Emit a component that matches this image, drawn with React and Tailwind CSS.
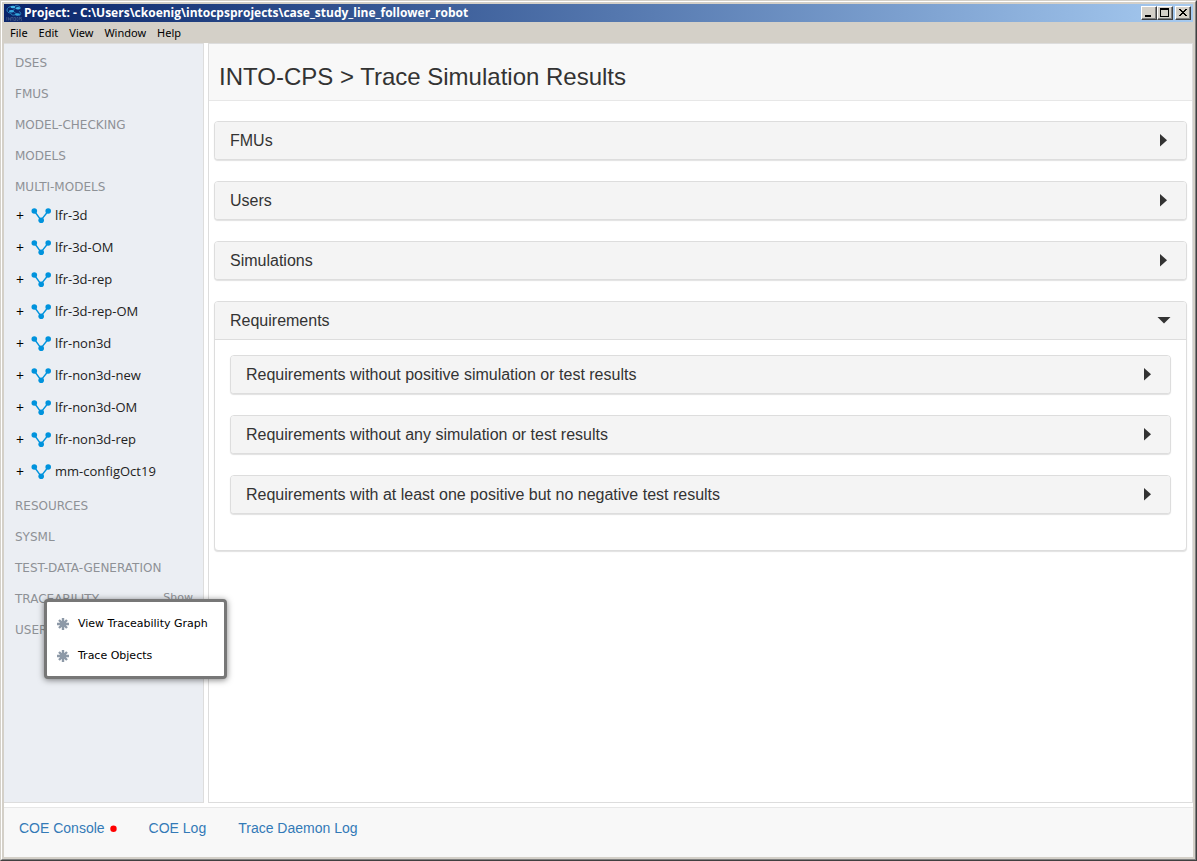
import React from "react";

const MENUS = ["File", "Edit", "View", "Window", "Help"];
const TOP_SECTIONS = ["DSES", "FMUS", "MODEL-CHECKING", "MODELS", "MULTI-MODELS"];
const MODELS = [
  "lfr-3d",
  "lfr-3d-OM",
  "lfr-3d-rep",
  "lfr-3d-rep-OM",
  "lfr-non3d",
  "lfr-non3d-new",
  "lfr-non3d-OM",
  "lfr-non3d-rep",
  "mm-configOct19",
];
const LOWER_SECTIONS = ["RESOURCES", "SYSML", "TEST-DATA-GENERATION"];
const REQUIREMENTS = [
  "Requirements without positive simulation or test results",
  "Requirements without any simulation or test results",
  "Requirements with at least one positive but no negative test results",
];

function AppLogo() {
  return (
    <svg className="h-4 w-4 shrink-0" viewBox="0 0 16 16" aria-hidden="true">
      <path d="M6 1.500C3 1.500 1 3 1 5s1.500 3 3.500 3M9 .8c3-.6 5.500.7 5.500 2.700M4.500 8c.5 2 3 2.800 5 1.500M13 6.500c2 .5 2.500 3 .5 4.200" fill="none" stroke="#2583bd" strokeWidth="1" />
      <path d="M5.500 6.500 10 3M8 7l4 3" fill="none" stroke="#2583bd" strokeWidth=".8" />
      <ellipse cx="7" cy="2" rx="2.400" ry="1.200" fill="#43b6e8" />
      <ellipse cx="12" cy="3.200" rx="2.200" ry="1.200" fill="#43b6e8" />
      <ellipse cx="5.500" cy="6.300" rx="2.600" ry="1.200" fill="#35a9df" />
      <ellipse cx="11.500" cy="9.500" rx="2.500" ry="1.300" fill="#35a9df" />
      <path d="M.8 12v3.500M2.500 15.500V12.500l2 3V12.500M5 12.500h2M6 12.500v3M7.800 12.500h1.700v3H7.800zM12 12.500h-1v3h1M13 15.500v-3h1.200v1.500H13M15.700 12.500h-.9v1.500h.9v1.500h-.9" fill="none" stroke="#49618d" strokeWidth=".7" />
    </svg>
  );
}

function WindowButton({ label, children }) {
  return (
    <button
      type="button"
      aria-label={label}
      className="flex h-3.5 w-4 items-center justify-center border border-t-white border-r-[#404040] border-b-[#404040] border-l-white bg-[#d4d0c8] shadow-[inset_-1px_-1px_0_#808080]"
    >
      <svg className="h-3 w-3.5 shrink-0" viewBox="0 0 14 12" shapeRendering="crispEdges" aria-hidden="true">
        {children}
      </svg>
    </button>
  );
}

function ModelIcon() {
  return (
    <svg className="h-4 w-5 shrink-0" viewBox="0 0 20 16" aria-hidden="true">
      <path d="M3.300 3 10 12.200 17.300 3" fill="none" stroke="#0093dd" strokeWidth="1.400" />
      <circle cx="3.300" cy="3" r="2.800" fill="#0093dd" />
      <circle cx="17.200" cy="3" r="2.800" fill="#0093dd" />
      <circle cx="10.200" cy="12.200" r="2.800" fill="#0093dd" />
    </svg>
  );
}

function AsteriskIcon() {
  return (
    <svg className="h-3 w-3 shrink-0" viewBox="0 0 12 12" aria-hidden="true">
      <path d="M6 0v12M0 6h12M2 2l8 8M10 2l-8 8" stroke="#8d99a7" strokeWidth="2.400" />
    </svg>
  );
}

function Caret({ open }) {
  return open ? (
    <svg className="h-3.5 w-3.5" viewBox="0 0 14 14" aria-hidden="true">
      <path d="M0.500 3h13L7 9.500z" fill="#333" />
    </svg>
  ) : (
    <svg className="h-3.5 w-3.5" viewBox="0 0 14 14" aria-hidden="true">
      <path d="M3 0v12.500L10 6.200z" fill="#333" />
    </svg>
  );
}

function Section({ children, action }) {
  return (
    <div className="flex h-[31px] items-center justify-between pr-2.5 pl-[11px] text-[#8e9196]">
      <h2 className="text-xs">{children}</h2>
      {action && (
        <button type="button" className="shrink-0 text-[11px]">
          {action}
        </button>
      )}
    </div>
  );
}

function Panel({ title, open = false, children }) {
  return (
    <section className="rounded border border-[#ddd] bg-white shadow-[0_1px_1px_rgba(0,0,0,0.12)]">
      <button
        type="button"
        aria-expanded={open}
        className={
          "flex w-full items-center justify-between rounded-t-[3px] bg-[#f4f4f4] px-[15px] text-left text-base text-[#333] " +
          (open ? "h-[38px] border-b border-[#ddd]" : "h-[37px] rounded-b-[3px]")
        }
      >
        <span>{title}</span>
        <Caret open={open} />
      </button>
      {children}
    </section>
  );
}

export default function App() {
  return (
    <div className="flex min-h-screen flex-col border border-t-[#d4d0c8] border-r-[#404040] border-b-[#404040] border-l-[#d4d0c8] bg-white font-['Liberation_Sans',Arial,sans-serif]">
      <div className="flex grow flex-col border border-t-white border-r-[#808080] border-b-[#808080] border-l-white">
        <div className="flex grow flex-col border-2 border-[#d4d0c8]">
          <header className="bg-[#d4d0c8]">
            <div className="flex h-[18px] items-center gap-0.5 bg-linear-to-r from-[#0a246a] to-[#a6caf0] px-0.5 text-white">
              <AppLogo />
              <h1 className="grow truncate font-['Open_Sans',Tahoma,sans-serif] text-xs font-bold">
                Project: - C:\Users\ckoenig\intocpsprojects\case_study_line_follower_robot
              </h1>
              <div className="flex gap-0.5">
                <div className="flex">
                  <WindowButton label="Minimize">
                    <path d="M3 8h6v2H3z" />
                  </WindowButton>
                  <WindowButton label="Maximize">
                    <path fillRule="evenodd" d="M2 1h9v9H2zM3 3v6h7V3z" />
                  </WindowButton>
                </div>
                <WindowButton label="Close">
                  <path d="M3 2h2v1h1v1h2V3h1V2h2v1h-1v1H9v1H8v1h1v1h1v1h1v1H9V8H8V7H6v1H5v1H3V8h1V7h1V6h1V5H5V4H4V3H3z" />
                </WindowButton>
              </div>
            </div>
            <nav className="flex h-[21px] items-center gap-px px-px pt-0.5 font-['Noto_Sans',sans-serif] text-[11px] text-black">
              {MENUS.map((m) => (
                <button type="button" key={m} className="px-[5px]">
                  {m}
                </button>
              ))}
            </nav>
          </header>

          <div className="flex grow gap-1 pb-1">
            <aside className="relative w-[200px] shrink-0 border-t border-r border-b border-[#ddd] bg-[#ebeef3] pt-[3px] font-['DejaVu_Sans',Verdana,sans-serif]">
              {TOP_SECTIONS.map((s) => (
                <Section key={s}>{s}</Section>
              ))}
              <ul className="font-['Open_Sans',sans-serif] text-[13px] text-[#222]">
                {MODELS.map((m) => (
                  <li key={m} className="flex h-8 items-center pb-1 pl-3">
                    <button type="button" aria-label={"Expand " + m} className="w-[15px] text-left text-sm text-black">
                      +
                    </button>
                    <ModelIcon />
                    <a href="#model" className="ml-1">
                      {m}
                    </a>
                  </li>
                ))}
              </ul>
              {LOWER_SECTIONS.map((s) => (
                <Section key={s}>{s}</Section>
              ))}
              <Section action="Show">TRACEABILITY</Section>
              <Section>USER</Section>
              <div
                role="menu"
                className="absolute top-[555px] left-10 z-10 flex w-max flex-col rounded border-[3px] border-[#777] bg-white pt-1.5 pb-1 text-[11px] text-black shadow-[0_1px_6px_rgba(0,0,0,0.5)]"
              >
                {["View Traceability Graph", "Trace Objects"].map((t) => (
                  <button type="button" role="menuitem" key={t} className="flex h-8 items-center gap-[9px] pr-4 pl-2.5">
                    <AsteriskIcon />
                    <span>{t}</span>
                  </button>
                ))}
              </div>
            </aside>

            <main className="min-w-0 grow border border-[#ddd] bg-white">
              <div className="flex h-[57px] items-center border-b border-[#e7e7e7] bg-[#f8f8f8] px-2.5 pt-2.5 text-2xl text-[#333]">
                <h2>INTO-CPS &gt; Trace Simulation Results</h2>
              </div>
              <div className="flex flex-col gap-[21px] px-[5px] pt-5">
                <Panel title="FMUs" />
                <Panel title="Users" />
                <Panel title="Simulations" />
                <Panel title="Requirements" open>
                  <div className="flex flex-col gap-[21px] px-[15px] pt-[15px] pb-9">
                    {REQUIREMENTS.map((r) => (
                      <Panel key={r} title={r} />
                    ))}
                  </div>
                </Panel>
              </div>
            </main>
          </div>

          <footer className="flex h-[50px] shrink-0 items-start gap-8 border-t border-[#e7e7e7] bg-[#f8f8f8] px-[15px] pt-2.5 text-sm text-[#337ab7]">
            <a href="#console" className="flex items-center gap-1">
              COE Console
              <svg className="h-2 w-2" viewBox="0 0 8 8" aria-hidden="true">
                <circle cx="4.500" cy="4.800" r="3.200" fill="#f00" />
              </svg>
            </a>
            <a href="#coe-log">COE Log</a>
            <a href="#daemon-log">Trace Daemon Log</a>
          </footer>
        </div>
      </div>
    </div>
  );
}
